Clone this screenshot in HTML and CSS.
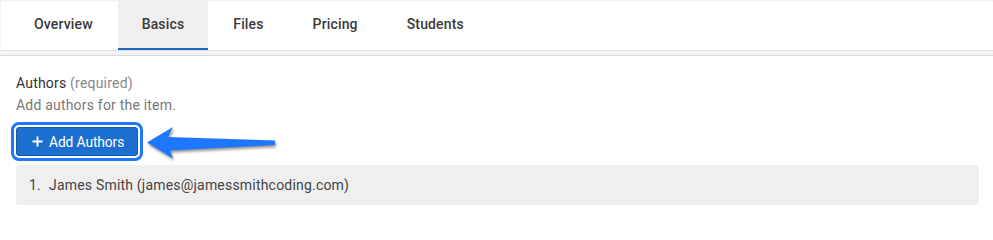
FILE: index.html
```html
<!DOCTYPE html>
<html lang="en">
<head>
<meta charset="utf-8">
<title>Basics</title>
<link rel="stylesheet" href="styles.css">
</head>
<body>
<div class="page">
  <nav class="tabs">
    <a class="tab">Overview</a>
    <a class="tab active">Basics</a>
    <a class="tab">Files</a>
    <a class="tab">Pricing</a>
    <a class="tab">Students</a>
  </nav>
  <div class="divider"></div>
  <main class="content">
    <div class="label">Authors <span class="muted">(required)</span></div>
    <div class="help">Add authors for the item.</div>
    <button class="btn" type="button">
      <svg class="plus" viewBox="0 0 12 12" width="12" height="12" aria-hidden="true"><path d="M6 0.5V11.5M0.5 6H11.5" stroke="#fff" stroke-width="2" fill="none"/></svg>
      <span>Add Authors</span>
    </button>
    <ol class="list">
      <li><span class="num">1.</span>James Smith (james@jamessmithcoding.com)</li>
    </ol>
    <svg class="arrow" viewBox="0 0 140 44" width="140" height="44" aria-hidden="true">
      <polygon points="7,21.5 33,6 28,16 135,19.5 135,24 30,29.5 33,37.5" fill="#1f77ff"/>
    </svg>
  </main>
</div>
</body>
</html>
```
FILE: styles.css
```css
* { box-sizing: border-box; }
html, body { margin: 0; padding: 0; background: #fff; }
body {
  font-family: Roboto, "Liberation Sans", Arial, sans-serif;
  font-size: 14px;
  color: #333;
}
.page { width: 993px; height: 229px; overflow: hidden; }
.tabs {
  display: flex;
  height: 50px;
  padding-left: 10px;
  background: #fff;
  box-shadow: inset 0 2px 2px -1px rgba(0,0,0,0.08), inset 2px 0 2px -1px rgba(0,0,0,0.05);
}
.tab {
  display: block;
  height: 50px;
  padding: 1px 24px 0;
  line-height: 47px;
  margin-right: 1px;
  font-weight: 500;
  letter-spacing: 0.15px;
  color: #3a3a3a;
  border-bottom: 2px solid transparent;
  cursor: pointer;
}
.tab.active {
  background: #efefef;
  border-bottom-color: #1c66c6;
}
.divider {
  height: 6px;
  background: #f3f3f8;
  border-top: 1px solid #e3e3e3;
  border-bottom: 1px solid #d9d9d9;
}
.content {
  position: relative;
  padding: 17px 14px 0 16px;
  letter-spacing: 0.2px;
}
.label { line-height: 20px; color: #333; }
.muted { color: #888; }
.help { margin-top: 2px; line-height: 20px; color: #777; }
.btn {
  display: flex;
  align-items: center;
  gap: 6px;
  margin-top: 12px;
  height: 29px;
  width: 122px;
  padding: 0 0 0 15px;
  background: #1b6fcf;
  border: 1px solid #1559a8;
  border-radius: 3px;
  color: #fff;
  font-family: inherit;
  font-size: 13.8px;
  letter-spacing: -0.1px;
  outline: 3px solid #1f77ff;
  outline-offset: 2px;
}
.plus { display: block; width: 11px; height: 11px; }
.list {
  list-style: none;
  margin: 9px 0 0 0;
  padding: 0 13px;
  height: 40px;
  display: flex;
  align-items: center;
  background: #efefef;
  border-radius: 3px;
  color: #444;
}
.num { margin-right: 8px; }
.arrow {
  position: absolute;
  left: 140px;
  top: 65px;
  filter: drop-shadow(1px 2px 1.5px rgba(0,0,0,0.45));
}
```
